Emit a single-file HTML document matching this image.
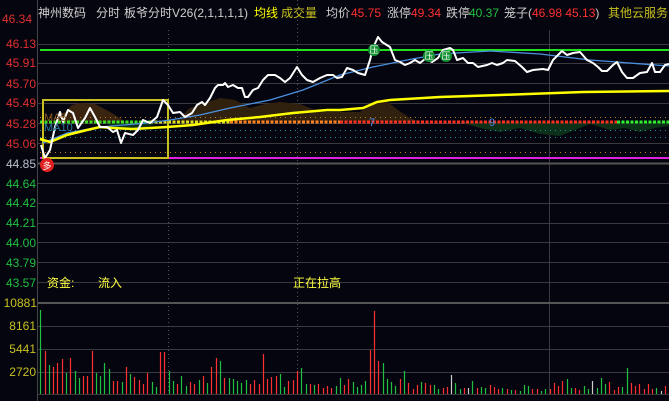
<!DOCTYPE html>
<html><head><meta charset="utf-8"><style>
html,body{margin:0;padding:0;background:#05050f;width:669px;height:401px;overflow:hidden}
body{position:relative;font-family:"Liberation Sans","Noto Sans CJK SC",sans-serif;font-size:12px}
.t{position:absolute;white-space:nowrap;line-height:14px}
.l{position:absolute;left:0;width:36px;text-align:right;line-height:14px;font-size:12px}
</style></head><body>
<svg width="669" height="401" style="position:absolute;left:0;top:0">
<g stroke="#3a3a3e" stroke-width="1">
<line x1="37" y1="44.5" x2="669" y2="44.5"/><line x1="37" y1="63.5" x2="669" y2="63.5"/>
<line x1="37" y1="83.5" x2="669" y2="83.5"/><line x1="37" y1="103.5" x2="669" y2="103.5"/>
<line x1="37" y1="123.5" x2="669" y2="123.5"/><line x1="37" y1="143.5" x2="669" y2="143.5"/>
<line x1="37" y1="183.5" x2="669" y2="183.5"/><line x1="37" y1="203.5" x2="669" y2="203.5"/>
<line x1="37" y1="223.5" x2="669" y2="223.5"/><line x1="37" y1="242.5" x2="669" y2="242.5"/>
<line x1="37" y1="262.5" x2="669" y2="262.5"/><line x1="37" y1="282.5" x2="669" y2="282.5"/>
<line x1="37" y1="326.5" x2="669" y2="326.5"/><line x1="37" y1="349.5" x2="669" y2="349.5"/>
<line x1="37" y1="372.5" x2="669" y2="372.5"/><line x1="37" y1="394.5" x2="669" y2="394.5"/>
<line x1="549.5" y1="30" x2="549.5" y2="394"/>
</g>
<line x1="37" y1="163.5" x2="669" y2="163.5" stroke="#555" stroke-width="2"/>
<line x1="37" y1="303" x2="669" y2="303" stroke="#555" stroke-width="2"/>
<line x1="37.5" y1="0" x2="37.5" y2="401" stroke="#444"/>
<g stroke="#555" stroke-dasharray="1,3"><line x1="168.5" y1="30" x2="168.5" y2="394"/><line x1="297.5" y1="0" x2="297.5" y2="394"/></g>
<!-- areas -->
<path d="M60 122 L65 112 L72 105 L80 103 L95 104 L110 112 L120 118 L125 122Z" fill="#3a2410"/>
<path d="M175 122 L190 108 L205 103 L220 98 L235 100 L250 108 L265 104 L280 102 L300 104 L320 112 L360 112 L372 104 L385 100 L398 110 L410 118 L420 122Z" fill="#30200e"/>
<path d="M105 122 L115 128 L135 130 L150 126 L160 122Z" fill="#0c3018"/>
<path d="M460 122 L480 128 L500 132 L520 128 L540 134 L560 136 L575 130 L590 124 L610 130 L625 128 L640 132 L655 128 L669 126 L669 122Z" fill="#0c3018"/>
<!-- dotted -->
<g stroke-dasharray="1,4" stroke-width="1">
<line x1="40" y1="117.5" x2="669" y2="117.5" stroke="#c08020"/>
<line x1="40" y1="152.5" x2="669" y2="152.5" stroke="#c08020"/>
<line x1="40" y1="130.5" x2="669" y2="130.5" stroke="#1a90a0"/>
<line x1="40" y1="137.5" x2="669" y2="137.5" stroke="#1a90a0"/>
</g>
<g stroke-width="3" stroke-dasharray="3,1.5">
<line x1="40" y1="122" x2="150" y2="122" stroke="#40e020"/>
<line x1="150" y1="122" x2="230" y2="122" stroke="#e0e020"/>
<line x1="230" y1="122" x2="340" y2="122" stroke="#ff8020"/>
<line x1="340" y1="122" x2="617" y2="122" stroke="#ff3020"/>
<line x1="617" y1="122" x2="669" y2="122" stroke="#30f030"/>
</g>
<line x1="40" y1="50" x2="669" y2="50" stroke="#20e020" stroke-width="2"/>
<line x1="40" y1="158" x2="669" y2="158" stroke="#e020e0" stroke-width="2"/>
<rect x="43" y="100" width="125" height="58" fill="none" stroke="#c8c020" stroke-width="2"/>
<polyline fill="none" stroke="#4a90e0" stroke-width="1.3" points="43,143 67,133 100,127 147,123 170,120 200,115 230,108 270,100 303,90 340,75 373,67 407,60 440,54 490,51 540,54 590,60 669,66"/>
<polyline fill="none" stroke="#ffff00" stroke-width="2.5" points="40,139 50,142 67,135 87,130 100,127 113,128 133,129 150,128 167,127 193,125 227,120 260,117 293,113 327,110 340,110 363,108 377,102 390,100 440,97 500,95 583,92 669,91"/>
<polyline fill="none" stroke="#ffffff" stroke-width="2" stroke-linejoin="round" points="41,145 45,158 50,150 55,127 60,112 63,122 68,110 73,113 78,128 85,118 90,108 95,117 100,127 107,127 113,132 117,130 121,143 125,133 133,135 138,130 143,120 150,123 157,117 163,100 168,105 173,113 180,112 185,117 192,113 197,105 202,102 205,105 210,98 215,88 218,85 223,85 225,83 228,87 233,85 238,88 242,88 245,97 248,97 253,90 258,88 263,80 268,75 275,75 280,78 285,82 290,78 297,67 302,75 307,80 313,82 320,78 327,75 333,75 337,78 342,77 347,68 353,70 358,73 365,75 370,60 373,48 378,37 382,42 390,47 395,60 400,62 405,65 410,63 415,60 420,63 425,59 432,62 438,58 443,50 450,48 453,50 457,60 463,58 468,63 473,63 478,67 487,65 492,63 497,65 503,63 507,60 515,61 522,67 527,72 533,70 543,69 548,70 553,60 562,51 567,55 573,53 580,52 587,60 593,63 598,67 602,71 607,71 613,65 617,62 622,72 627,78 633,78 640,73 647,72 652,63 655,72 660,72 665,65 669,64"/>
<!-- badges -->
<circle cx="47" cy="165" r="7" fill="#e02020"/><text x="47" y="169" font-size="9" fill="#fff" text-anchor="middle" font-family="Noto Sans CJK SC">多</text>
<g fill="#109030"><circle cx="374" cy="50" r="6"/><circle cx="429" cy="56" r="6"/><circle cx="446" cy="56" r="6"/></g>
<g font-size="9" fill="#fff" text-anchor="middle" font-family="Noto Sans CJK SC"><text x="374" y="53">压</text><text x="429" y="59">压</text><text x="446" y="59">压</text></g>
<text x="44" y="121" font-size="11" fill="#8a5a20">MA5</text>
<text x="44" y="131" font-size="11" fill="#2a7aa0">MA10</text>
<text x="369" y="126" font-size="11" fill="#4a8ae0">7</text>
<text x="489" y="126" font-size="11" fill="#4a8ae0">9</text>
<!-- volume -->
<g stroke-width="1.2">
<path stroke="#20c040" d="M40.5 394V310M49.5 394V365M66.5 394V373M75.5 394V371M79.5 394V378M96.5 394V373M100.5 394V376M104.5 394V363M109.5 394V369M122.5 394V382M130.5 394V374M152.5 394V382M156.5 394V387M169.5 394V371M173.5 394V381M181.5 394V376M186.5 394V386M199.5 394V380M207.5 394V383M220.5 394V361M229.5 394V378M233.5 394V379M237.5 394V381M241.5 394V383M246.5 394V380M280.5 394V374M284.5 394V387M301.5 394V368M306.5 394V384M314.5 394V385M336.5 394V386M340.5 394V378M353.5 394V382M357.5 394V387M361.5 394V385M365.5 394V381M383.5 394V363M387.5 394V379M391.5 394V382M395.5 394V386M404.5 394V371M421.5 394V382M434.5 394V385M438.5 394V389M455.5 394V383M460.5 394V389M472.5 394V381M481.5 394V387M485.5 394V388M502.5 394V388M511.5 394V390M520.5 394V391M524.5 394V385M528.5 394V386M541.5 394V391M545.5 394V389M567.5 394V379M571.5 394V388M584.5 394V386M588.5 394V389M597.5 394V388M601.5 394V378M605.5 394V384M622.5 394V387M627.5 394V368M656.5 394V388"/>
<path stroke="#ff3030" d="M45.5 394V351M53.5 394V367M57.5 394V363M62.5 394V359M70.5 394V358M83.5 394V376M87.5 394V376M92.5 394V351M113.5 394V381M117.5 394V381M126.5 394V367M134.5 394V377M139.5 394V380M143.5 394V384M147.5 394V373M160.5 394V352M164.5 394V352M177.5 394V384M190.5 394V382M194.5 394V384M203.5 394V376M211.5 394V367M216.5 394V358M224.5 394V378M250.5 394V384M254.5 394V380M259.5 394V384M263.5 394V354M267.5 394V379M271.5 394V377M276.5 394V376M288.5 394V381M293.5 394V380M297.5 394V371M310.5 394V384M318.5 394V384M323.5 394V388M327.5 394V386M331.5 394V388M344.5 394V385M348.5 394V379M370.5 394V350M374.5 394V311M378.5 394V361M400.5 394V379M408.5 394V383M413.5 394V389M417.5 394V385M425.5 394V383M430.5 394V385M443.5 394V388M447.5 394V387M464.5 394V388M477.5 394V388M490.5 394V385M494.5 394V387M498.5 394V389M507.5 394V389M515.5 394V390M532.5 394V389M537.5 394V389M550.5 394V389M554.5 394V383M558.5 394V386M562.5 394V381M575.5 394V388M579.5 394V390M609.5 394V382M614.5 394V390M618.5 394V387M631.5 394V383M635.5 394V386M639.5 394V384M644.5 394V389M648.5 394V384M652.5 394V389M665.5 394V386"/>
<path stroke="#cccccc" d="M451.5 394V375M468.5 394V388M592.5 394V381M661.5 394V391"/>
</g>
</svg>
<div class="t" style="left:2px;top:12px;color:#e03030">46.34</div>
<div class="l" style="top:37px;color:#e03030">46.13</div>
<div class="l" style="top:56px;color:#e03030">45.91</div>
<div class="l" style="top:77px;color:#e03030">45.70</div>
<div class="l" style="top:96px;color:#e03030">45.49</div>
<div class="l" style="top:117px;color:#e03030">45.28</div>
<div class="l" style="top:137px;color:#e03030">45.06</div>
<div class="l" style="top:157px;color:#b8c0c8">44.85</div>
<div class="l" style="top:177px;color:#20c040">44.64</div>
<div class="l" style="top:196px;color:#20c040">44.42</div>
<div class="l" style="top:216px;color:#20c040">44.21</div>
<div class="l" style="top:236px;color:#20c040">44.00</div>
<div class="l" style="top:256px;color:#20c040">43.79</div>
<div class="l" style="top:276px;color:#20c040">43.57</div>
<div class="l" style="top:296px;color:#c8c020;width:37px">10881</div>
<div class="l" style="top:319px;color:#c8c020">8161</div>
<div class="l" style="top:342px;color:#c8c020">5441</div>
<div class="l" style="top:365px;color:#c8c020">2720</div>
<div class="t" style="left:38px;top:6px;color:#d0d0d0">神州数码</div>
<div class="t" style="left:96px;top:6px;color:#d0d0d0">分时</div>
<div class="t" style="left:124px;top:6px;color:#d0d0d0">板爷分时V26(2,1,1,1,1)</div>
<div class="t" style="left:254px;top:6px;color:#ffff00">均线</div>
<div class="t" style="left:281px;top:6px;color:#c8c020">成交量</div>
<div class="t" style="left:326px;top:6px;color:#d0d0d0">均价</div>
<div class="t" style="left:351px;top:6px;color:#ff3030">45.75</div>
<div class="t" style="left:387px;top:6px;color:#d0d0d0">涨停</div>
<div class="t" style="left:411px;top:6px;color:#ff3030">49.34</div>
<div class="t" style="left:446px;top:6px;color:#d0d0d0">跌停</div>
<div class="t" style="left:469px;top:6px;color:#20c040">40.37</div>
<div class="t" style="left:504px;top:6px;color:#d0d0d0">笼子(<span style="color:#ff3030">46.98 45.13</span>)</div>
<div class="t" style="left:608px;top:6px;color:#c8c020">其他云服务</div>
<div class="t" style="left:47px;top:276px;color:#ffff40">资金:</div>
<div class="t" style="left:98px;top:276px;color:#ffff40">流入</div>
<div class="t" style="left:293px;top:276px;color:#ffff40">正在拉高</div>
</body></html>
